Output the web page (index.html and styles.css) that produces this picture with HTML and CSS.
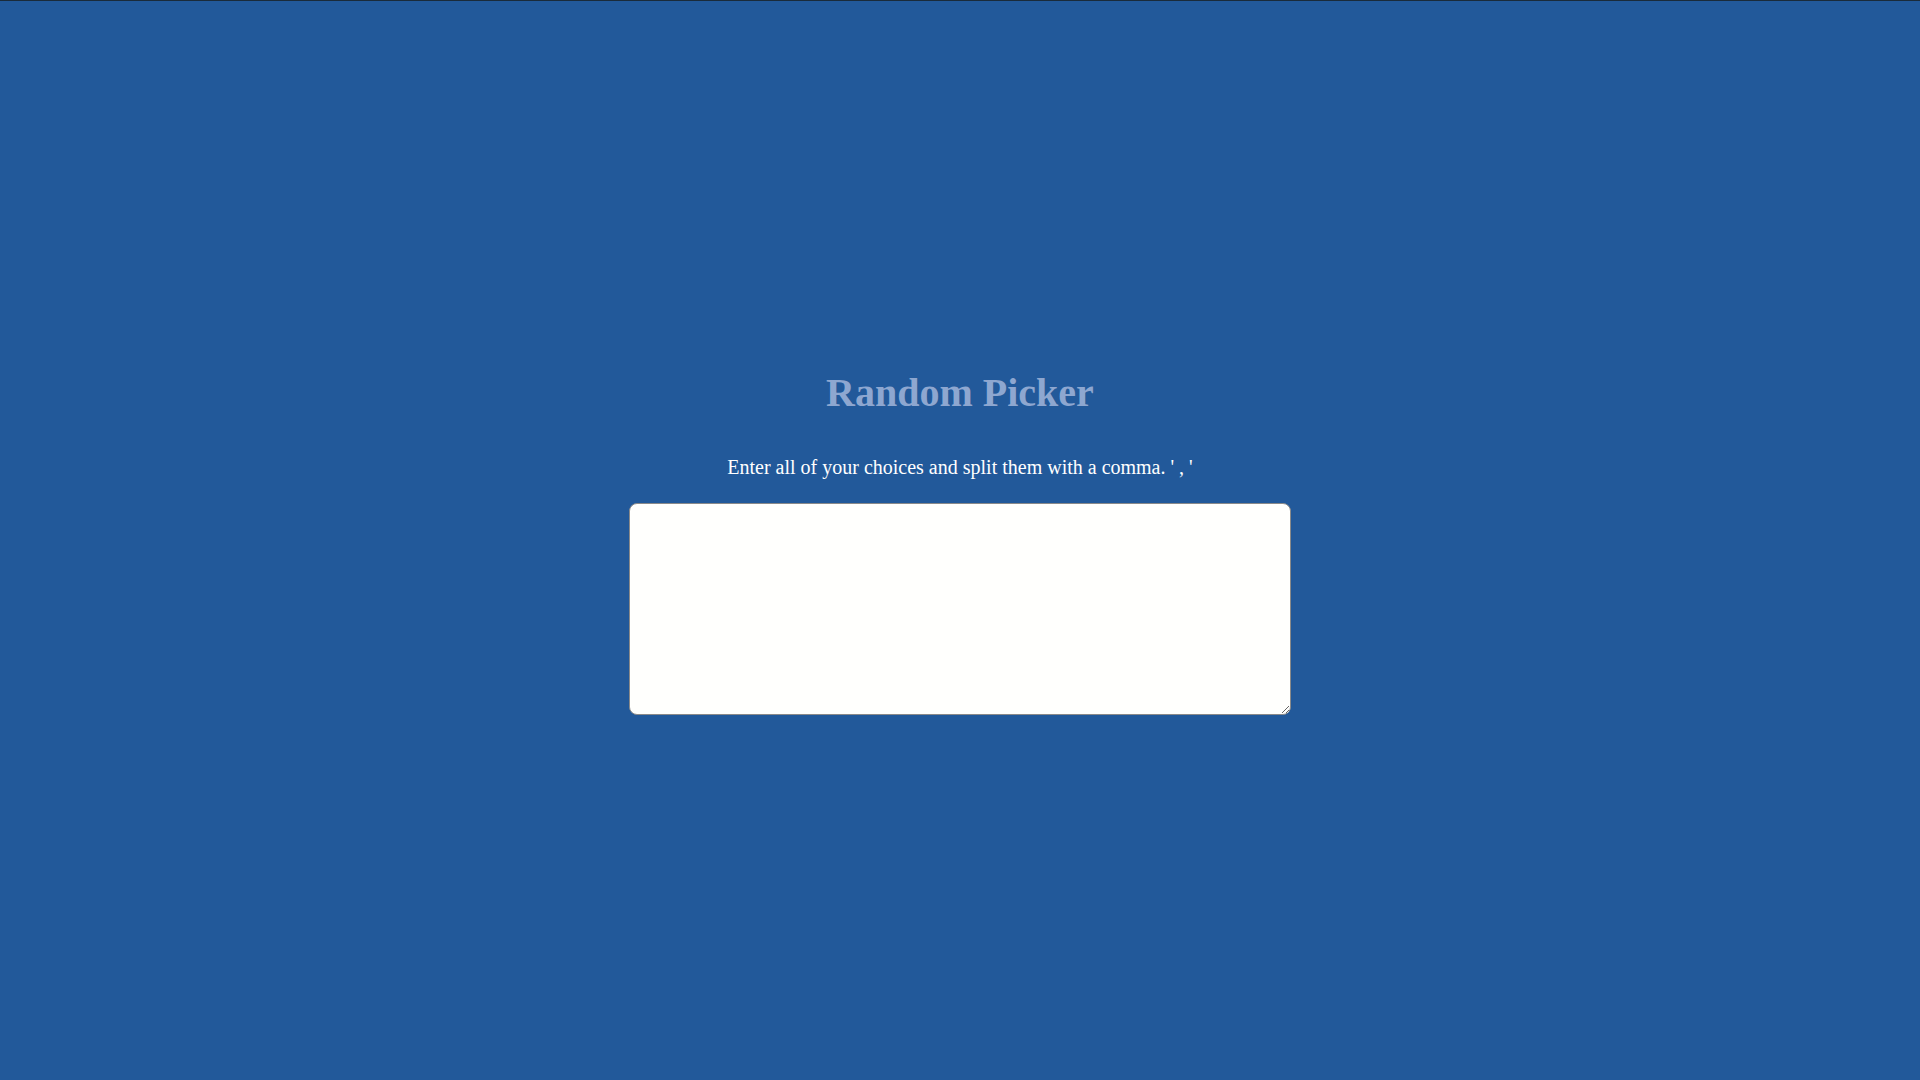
FILE: index.html
```html
<!DOCTYPE html>
<html lang="en">
<head>
<meta charset="utf-8">
<title>Random Picker</title>
<link rel="stylesheet" href="styles.css">
</head>
<body>
<div class="topline"></div>
<main class="picker">
  <h1 class="title">Random Picker</h1>
  <p class="hint">Enter all of your choices and split them with a comma. ' , '</p>
  <textarea class="choices"></textarea>
</main>
</body>
</html>
```
FILE: styles.css
```css
html, body {
  margin: 0;
  padding: 0;
  height: 100%;
}
body {
  background: #22599a;
  font-family: "Liberation Serif", "Times New Roman", serif;
  overflow: hidden;
}
.topline {
  height: 1px;
  background: #1a2b3a;
}
.picker {
  display: flex;
  flex-direction: column;
  align-items: center;
  padding-top: 369px;
}
.title {
  margin: 0;
  font-size: 40px;
  font-weight: bold;
  color: #8ea7d0;
  line-height: 46px;
}
.hint {
  margin: 40px 0 0;
  font-size: 20px;
  line-height: 23px;
  color: #ffffff;
}
.choices {
  margin-top: 24px;
  width: 662px;
  height: 212px;
  box-sizing: border-box;
  border: 1px solid #8a8a8a;
  border-radius: 8px;
  background: #fffffd;
  resize: vertical;
  font-family: "Liberation Serif", serif;
  font-size: 16px;
  padding: 4px;
}
```
